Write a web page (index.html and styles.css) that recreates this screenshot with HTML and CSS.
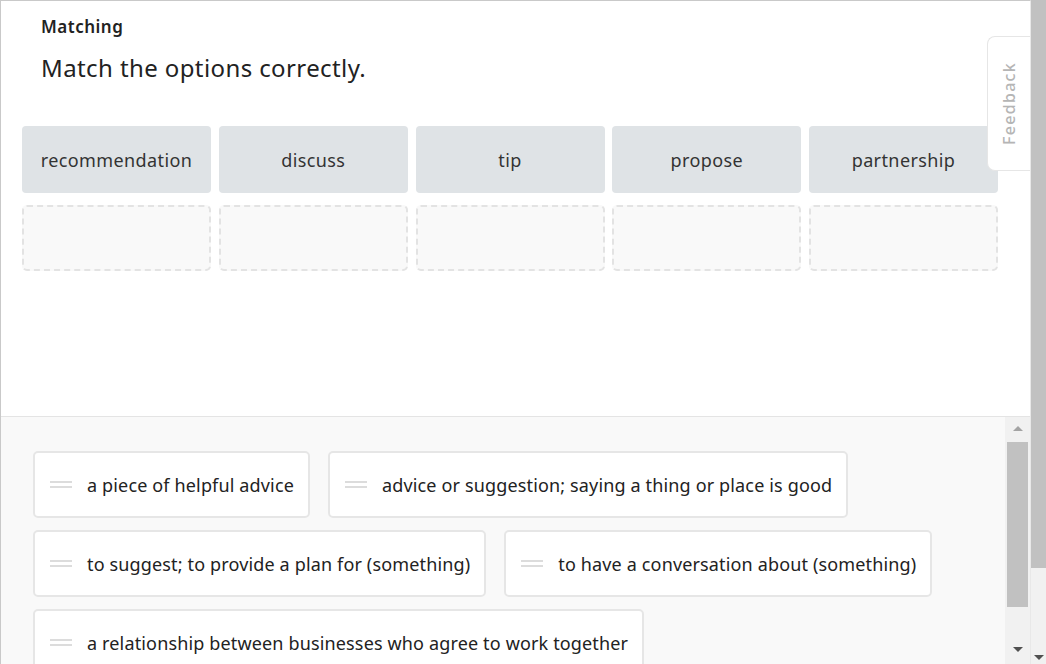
FILE: index.html
```html
<!DOCTYPE html>
<html>
<head>
<meta charset="utf-8">
<link rel="stylesheet" href="styles.css">
</head>
<body>
<div class="frame">
  <div class="main">
    <div class="top">
      <div class="kicker">Matching</div>
      <h1 class="prompt">Match the options correctly.</h1>
      <div class="grid">
        <div class="term">recommendation</div>
        <div class="term">discuss</div>
        <div class="term">tip</div>
        <div class="term">propose</div>
        <div class="term">partnership</div>
        <div class="slot"></div>
        <div class="slot"></div>
        <div class="slot"></div>
        <div class="slot"></div>
        <div class="slot"></div>
      </div>
      <div class="feedback"><span>Feedback</span></div>
    </div>
    <div class="bottom">
      <div class="pool">
        <div class="opt"><span class="handle"></span><span>a piece of helpful advice</span></div>
        <div class="opt"><span class="handle"></span><span>advice or suggestion; saying a thing or place is good</span></div>
        <div class="opt"><span class="handle"></span><span>to suggest; to provide a plan for (something)</span></div>
        <div class="opt"><span class="handle"></span><span>to have a conversation about (something)</span></div>
        <div class="opt"><span class="handle"></span><span>a relationship between businesses who agree to work together</span></div>
      </div>
      <div class="iscroll">
        <div class="arrow up light"></div>
        <div class="ithumb"></div>
        <div class="ispace"></div>
        <div class="arrow down"></div>
      </div>
    </div>
  </div>
  <div class="oscroll">
    <div class="othumb"></div>
    <div class="ospace"></div>
    <div class="arrow down"></div>
  </div>
</div>
</body>
</html>
```
FILE: styles.css
```css
* { box-sizing: border-box; }
html, body { margin: 0; padding: 0; overflow: hidden; }
body {
  font-family: "Noto Sans", Lato, sans-serif;
  color: #222;
  background: #fff;
}
.frame {
  display: flex;
  width: 1046px;
  height: 664px;
}
.main {
  width: 1031px;
  display: flex;
  flex-direction: column;
  border-top: 1px solid #c9c9c9;
  border-left: 1px solid #c9c9c9;
  border-right: 1px solid #e8e8e8;
}
.top {
  position: relative;
  height: 415px;
  padding: 0 21px;
  background: #fff;
}
.kicker {
  margin: 15px 0 0 19px;
  font-size: 17px;
  font-weight: 600;
  line-height: 22px;
  letter-spacing: 0.5px;
  color: #222;
}
.prompt {
  margin: 14px 0 0 19px;
  font-size: 24px;
  font-weight: 400;
  line-height: 32px;
  letter-spacing: 0.4px;
  color: #222;
}
.grid {
  margin-top: 42px;
  width: 976px;
  display: grid;
  grid-template-columns: repeat(5, 1fr);
  column-gap: 7.75px;
  row-gap: 12px;
}
.term {
  height: 67px;
  border-radius: 4px;
  background: #dfe3e6;
  display: flex;
  align-items: center;
  justify-content: center;
  font-size: 18px;
  letter-spacing: 0.4px;
  color: #333;
}
.slot {
  height: 66px;
  border-radius: 5px;
  border: 2px dashed #e3e3e3;
  background: #f9f9f9;
}
.feedback {
  position: absolute;
  right: 0;
  top: 35px;
  width: 43px;
  height: 135px;
  background: #fff;
  border: 1px solid #e6e6e6;
  border-right: none;
  border-radius: 8px 0 0 8px;
  display: flex;
  align-items: center;
  justify-content: center;
}
.feedback span {
  writing-mode: vertical-rl;
  transform: rotate(180deg);
  font-size: 16px;
  letter-spacing: 1.3px;
  color: #b5b5b5;
  font-weight: 500;
}
.bottom {
  flex: 1;
  display: flex;
  background: #f9f9f9;
  border-top: 1px solid #e4e4e4;
  min-height: 0;
}
.pool {
  flex: 1;
  padding: 34px 0 0 32px;
  display: flex;
  flex-wrap: wrap;
  align-content: flex-start;
  column-gap: 18px;
  row-gap: 12px;
  overflow: hidden;
}
.opt {
  height: 67px;
  background: #fff;
  border: 2px solid #e6e6e6;
  border-radius: 5px;
  display: flex;
  align-items: center;
  padding: 0 14px 0 15px;
  font-size: 18px;
  letter-spacing: 0.15px;
  color: #222;
}
.handle {
  width: 22px;
  height: 7px;
  border-top: 2px solid #dcdcdc;
  border-bottom: 2px solid #dcdcdc;
  margin-right: 15px;
  flex: none;
}
.iscroll {
  width: 25px;
  background: #f1f1f1;
  display: flex;
  flex-direction: column;
  align-items: center;
  padding: 9px 0 12px;
}
.ithumb {
  width: 21px;
  height: 165px;
  background: #c1c1c1;
  margin-top: 11px;
}
.ispace { flex: 1; }
.arrow {
  width: 0;
  height: 0;
  border-left: 5px solid transparent;
  border-right: 5px solid transparent;
}
.arrow.up { border-bottom: 5px solid #505050; }
.arrow.up.light { border-bottom-color: #a3a3a3; }
.arrow.down { border-top: 5px solid #505050; }
.oscroll {
  width: 15px;
  display: flex;
  flex-direction: column;
  align-items: center;
  background: #f1f1f1;
  padding-bottom: 4px;
}
.othumb {
  width: 15px;
  height: 568px;
  background: #c1c1c1;
}
.ospace { flex: 1; }
```
